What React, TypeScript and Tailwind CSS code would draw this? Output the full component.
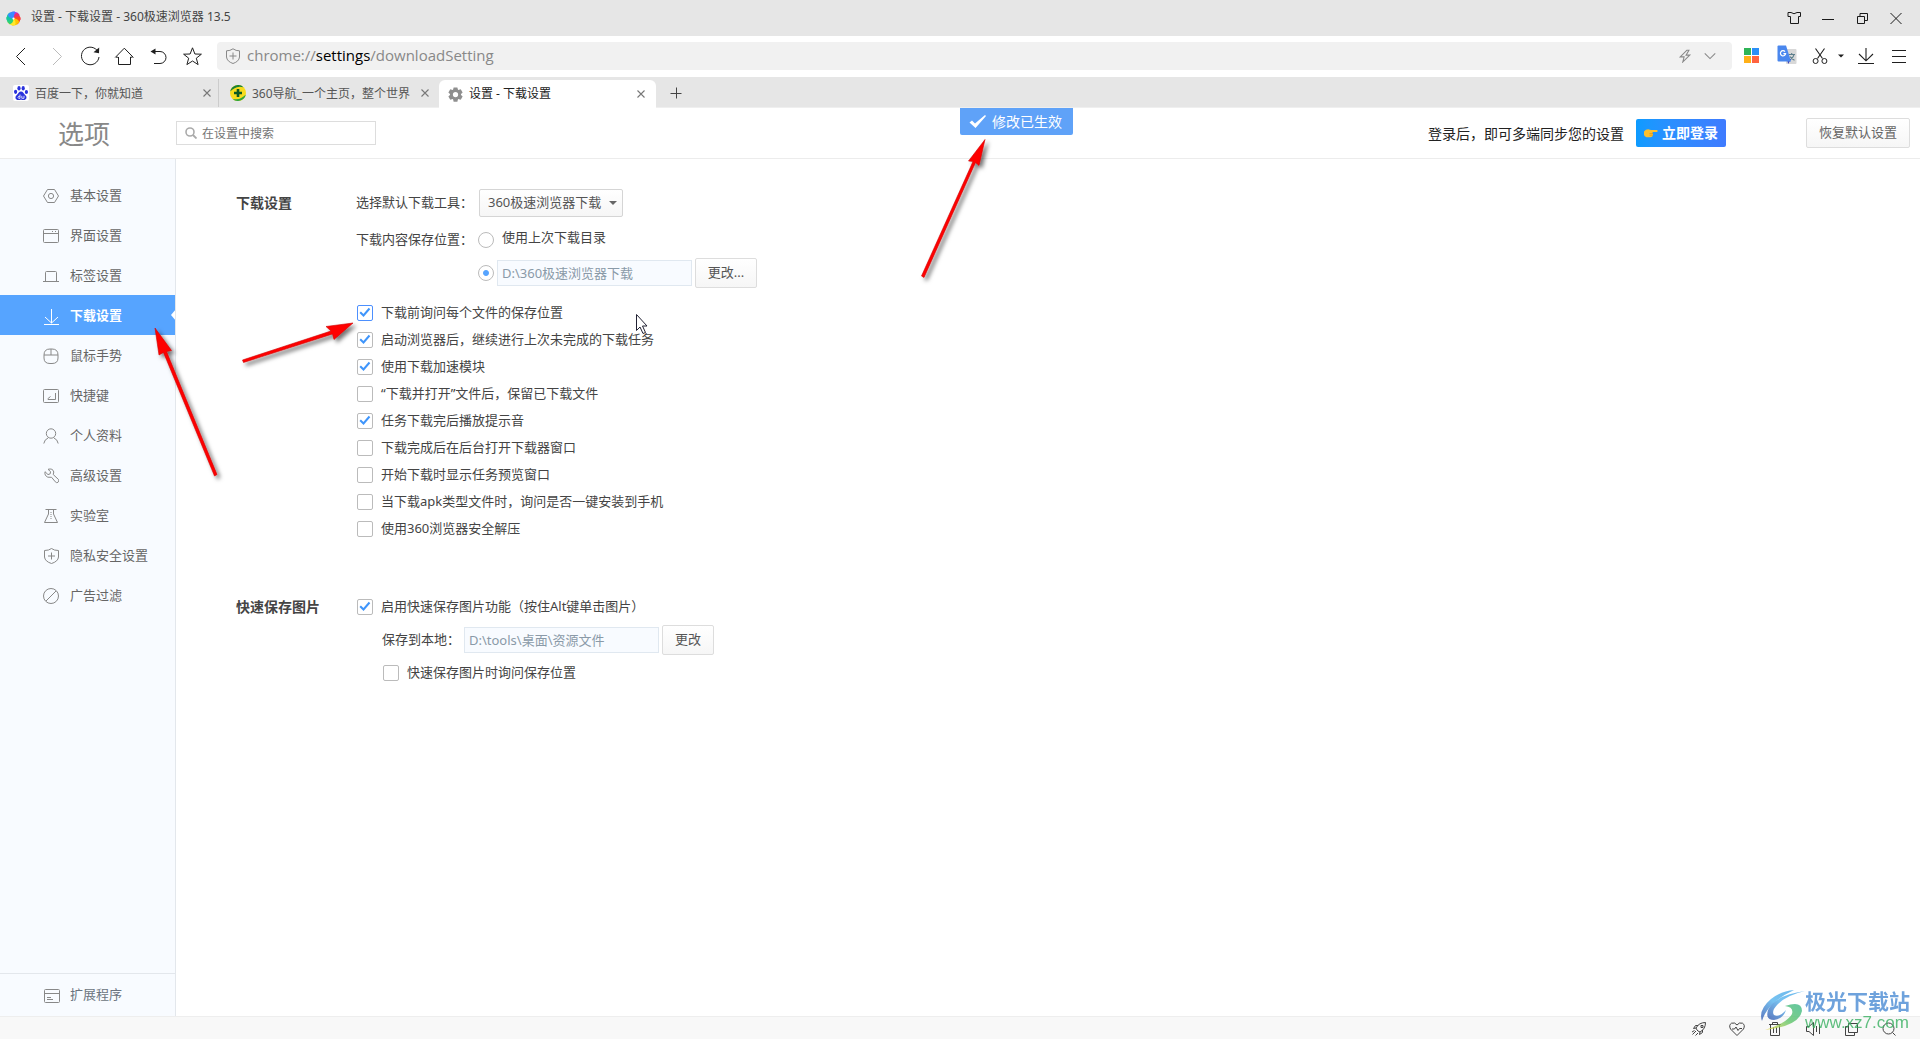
import { useState } from "react";
import type { ReactNode } from "react";

type IconProps = { children: ReactNode; size?: string; box?: string; className?: string };

function Icon({ children, size = "size-4", box = "0 0 16 16", className = "" }: IconProps) {
  return (
    <svg
      viewBox={box}
      className={`${size} shrink-0 ${className}`}
      fill="none"
      stroke="currentColor"
      strokeWidth="1"
      aria-hidden="true"
    >
      {children}
    </svg>
  );
}

function BrowserLogo() {
  const petals = ["#a535f0", "#f0306a", "#ff4b1f", "#ffc400", "#ffe92b", "#2fd07a", "#12c8a0", "#3a8bff"];
  return (
    <svg viewBox="-8 -8 16 16" className="size-[15px] shrink-0" aria-hidden="true">
      {petals.map((color, i) => (
        <path key={color} d="M0 0 Q-3.5 -4 -1.5 -7.2 Q4 -8 6.4 -4 Q4 -3 0 0Z" fill={color} transform={`rotate(${i * 45})`} />
      ))}
      <circle r="1.2" fill="#fff" />
    </svg>
  );
}

function TitleBar() {
  const button = "flex h-9 w-[34px] items-center justify-center";
  return (
    <header className="flex h-9 shrink-0 items-center bg-[#e6e6e6] pr-[7px] pl-1.5 text-[#1a1a1a]">
      <BrowserLogo />
      <h1 className="ml-2.5 pb-0.5 text-xs text-[#444]">设置 - 下载设置 - 360极速浏览器 13.5</h1>
      <div className="ml-auto flex">
        <button className={button} aria-label="皮肤">
          <Icon>
            <path d="M5 2.5 L2 2.5 L2 6.5 L4.5 6.5 L4.5 13.5 L12.5 13.5 L12.5 6.5 L14.5 6.5 L14.5 2.5 L11 2.5 Q8 5 5 2.5Z" />
          </Icon>
        </button>
        <button className={button} aria-label="最小化">
          <Icon>
            <path d="M2 9.5H14" />
          </Icon>
        </button>
        <button className={button} aria-label="还原">
          <Icon>
            <path d="M3.5 6.5H10.5V13.5H3.5ZM6 6V3.5H13.5V10.5H11" />
          </Icon>
        </button>
        <button className={button} aria-label="关闭">
          <Icon>
            <path d="M2.5 3 L13.5 14 M13.5 3 L2.5 14" />
          </Icon>
        </button>
      </div>
    </header>
  );
}

function Toolbar() {
  const button = "flex h-8 w-[34px] shrink-0 items-center justify-center";
  const wide = "flex h-8 w-[35px] shrink-0 items-center justify-center";
  return (
    <nav className="flex h-[41px] shrink-0 items-center bg-white pr-[5px] pb-[2px] pl-[5px] text-[#1f1f1f]" aria-label="工具栏">
      <button className={button} aria-label="后退">
        <Icon size="size-5" box="0 0 20 20">
          <path d="M13 2 L4.5 10.5 L13 19" />
        </Icon>
      </button>
      <button className={`${button} text-[#bbb]`} aria-label="前进">
        <Icon size="size-5" box="0 0 20 20">
          <path d="M7 2 L15.5 10.5 L7 19" />
        </Icon>
      </button>
      <button className={button} aria-label="刷新">
        <Icon size="size-5" box="0 0 20 20">
          <path d="M17 4.3 A8.8 8.8 0 1 0 19 11" />
          <path d="M19.2 1.5 L19 7.2 L13.5 6.2Z" fill="currentColor" stroke="none" />
        </Icon>
      </button>
      <button className={button} aria-label="主页">
        <Icon size="size-5" box="0 0 20 20">
          <path d="M1.2 11.5 L10.3 2.2 L19.4 11.5 M4 11.2 H2 M18.6 11.2 H16.5 M4.5 11 V18.5 H16.5 V11" />
        </Icon>
      </button>
      <button className={button} aria-label="撤销">
        <Icon size="size-5" box="0 0 20 20">
          <path d="M6 5.5 H12 A6 6 0 0 1 12 17.500 H6" />
          <path d="M2.500 5.500 L7.500 2.500 V8.500Z" fill="currentColor" stroke="none" />
        </Icon>
      </button>
      <button className={button} aria-label="收藏">
        <Icon size="size-5" box="0 0 20 20">
          <path d="M10.5 1.8 L12.9 8 L19.4 8.2 L14.3 12.2 L16.1 18.6 L10.5 15 L4.9 18.6 L6.7 12.2 L1.6 8.2 L8.1 8Z" />
        </Icon>
      </button>

      <div className="ml-2 flex h-7 flex-1 items-center rounded-sm bg-[#f1f1f1] pr-3.5 pl-2 text-[#888]">
        <Icon>
          <path d="M8 0.8 Q11 3 14.5 2.8 V9 Q14 13.5 8 15.5 Q2 13.5 1.5 9 V2.8 Q5 3 8 0.8Z M8 4.5V11.5M4.5 8H11.5" />
        </Icon>
        <p className="ml-1.5 pb-0.5 font-['Open_Sans',sans-serif] text-[15px] leading-6 text-[#888]">
          chrome://<span className="text-black">settings</span>/downloadSetting
        </p>
        <button className="mr-3 ml-auto" aria-label="极速模式">
          <Icon size="size-3.5">
            <path d="M10 1.5 L2.5 9 H7 L5.5 14.8 L13.5 7 H9.2 L12.5 1.5Z" strokeWidth="1.2" />
          </Icon>
        </button>
        <button className="pr-0.5" aria-label="展开地址栏">
          <Icon size="size-3">
            <path d="M1 4.5 L8 11.5 L15 4.5" strokeWidth="1.4" />
          </Icon>
        </button>
      </div>

      <button className={`${wide} ml-0.5`} aria-label="应用">
        <Icon size="size-[15px]" box="0 0 15 15">
          <g stroke="none">
            <path d="M0 0H7V7H0Z" fill="#2fb457" />
            <path d="M8 0H15V7H8Z" fill="#2a8ff7" />
            <path d="M0 8H7V15H0Z" fill="#ffb018" />
            <path d="M8 8H15V15H8Z" fill="#ff6340" />
          </g>
        </Icon>
      </button>
      <button className={wide} aria-label="翻译">
        <svg viewBox="0 0 20 20" className="mb-0.5 size-5" aria-hidden="true">
          <rect x="9" y="4" width="10.5" height="15" rx="1" fill="#d8d8d8" />
          <path d="M11.5 9.5H18M14.7 8V9.5M17 9.5C16.5 12 14.5 14 12.5 15M13 11.5C14 13.5 16 14.5 17.5 15.2" stroke="#5d7f8c" strokeWidth="1.1" fill="none" />
          <path d="M10 14H14L11.2 19Z" fill="#3a3fb8" />
          <path d="M1.5 0.5H9L14 16.5H1.5Q0.5 16.5 0.5 15.5V1.5Q0.5 0.5 1.5 0.5Z" fill="#4a87ee" />
          <path d="M8 6.600A2.600 2.600 0 1 0 8.600 8.600H6.400" stroke="#fff" strokeWidth="1.2" fill="none" />
        </svg>
      </button>
      <button className="flex h-8 w-11 shrink-0 items-center gap-2.5 pl-2" aria-label="截图">
        <Icon>
          <path d="M3.5 0.5 L10.5 10.5 M12.5 0.5 L5.5 10.5" strokeWidth="1.1" />
          <circle cx="3.6" cy="13" r="2.5" />
          <circle cx="12.4" cy="13" r="2.5" />
        </Icon>
        <Icon size="w-1.5 h-1" box="0 0 6 4">
          <path d="M0 0.5H6L3 3.5Z" fill="currentColor" stroke="none" />
        </Icon>
      </button>
      <button className={wide} aria-label="下载">
        <Icon>
          <path d="M8 0V12.5M1 6L8 12.8L15 6M0 15.5H16" strokeWidth="1.1" />
        </Icon>
      </button>
      <button className="flex h-8 w-8 shrink-0 items-center justify-center" aria-label="菜单">
        <Icon>
          <path d="M1 2.5H15M1 8.5H15M1 14.5H15" />
        </Icon>
      </button>
    </nav>
  );
}

function CloseTab() {
  return (
    <button className="ml-auto shrink-0 text-[#777]" aria-label="关闭标签页">
      <Icon size="size-2" box="0 0 8 8">
        <path d="M0.5 0.5L7.5 7.5M7.5 0.5L0.5 7.5" strokeWidth="1.1" />
      </Icon>
    </button>
  );
}

function BaiduIcon() {
  return (
    <svg viewBox="0 0 16 16" className="size-4 shrink-0 rounded-xs bg-white" aria-hidden="true">
      <g fill="#2a32dd">
        <ellipse cx="2.6" cy="6.8" rx="1.6" ry="2.1" />
        <ellipse cx="6" cy="3.2" rx="1.6" ry="2.2" />
        <ellipse cx="10.2" cy="3.2" rx="1.6" ry="2.2" />
        <ellipse cx="13.4" cy="7" rx="1.6" ry="2.1" />
        <path d="M8 6.6C10.2 6.6 10.6 8.8 12.4 10.2C14.6 12.2 13.2 15 10.8 15C9.4 15 9 14.7 8 14.7S6.6 15 5.2 15C2.6 15 1.4 12.2 3.6 10.2C5.4 8.8 5.8 6.6 8 6.6Z" />
      </g>
      <path d="M7 9.5V13.3H5.6Q4.4 12.4 5.6 11.3H7M8.8 10.8V13.3H11V10.8" fill="none" stroke="#fff" strokeWidth="0.8" />
    </svg>
  );
}

function NavIcon() {
  return (
    <svg viewBox="0 0 16 16" className="size-4 shrink-0" aria-hidden="true">
      <circle cx="8" cy="8" r="8" fill="#f7dc1d" />
      <path d="M0.2 6.5A8 8 0 0 1 13.5 2.2Q8 0.8 4.6 3.2Q2 4.6 0.2 6.5Z" fill="#15803a" />
      <path d="M15.8 9.5A8 8 0 0 1 2.6 13.9Q8 15.2 11.6 12.8Q14 11.2 15.8 9.5Z" fill="#2fa43c" />
      <path d="M6.7 4H9.3V6.7H12V9.3H9.3V12H6.7V9.3H4V6.7H6.7Z" fill="#0c5a24" />
    </svg>
  );
}

function GearIcon() {
  return (
    <svg viewBox="-8 -8 16 16" className="size-[15px] shrink-0" aria-hidden="true">
      <g fill="#8f8f8f">
        {[0, 60, 120, 180, 240, 300].map((a) => (
          <path key={a} d="M-2 -7.6H2L2.8 -4H-2.8Z" transform={`rotate(${a})`} />
        ))}
      </g>
      <circle r="4.3" fill="none" stroke="#8f8f8f" strokeWidth="3" />
    </svg>
  );
}

function TabStrip() {
  return (
    <div className="flex h-[31px] shrink-0 items-end border-b border-[#efefef] bg-[#e6e6e6] text-xs text-[#555]">
      <div className="flex h-7 w-[219px] items-center border-r border-[#ccc] pr-[7px] pl-[13px]">
        <BaiduIcon />
        <a href="#baidu" className="ml-1.5 pt-0.5">百度一下，你就知道</a>
        <CloseTab />
      </div>
      <div className="flex h-7 w-[220px] items-center pr-2.5 pl-[11px]">
        <NavIcon />
        <a href="#nav" className="ml-1.5 overflow-hidden pt-0.5 whitespace-nowrap">360导航_一个主页，整个世界</a>
        <CloseTab />
      </div>
      <div className="-mb-px flex h-7 w-[217px] items-center rounded-t-md bg-white pr-[11px] pl-[9px] text-[#222]">
        <GearIcon />
        <a href="#settings" className="ml-1.5">设置 - 下载设置</a>
        <CloseTab />
      </div>
      <button className="ml-3.5 flex h-7 w-3 items-center text-[#444]" aria-label="新标签页">
        <Icon size="size-3" box="0 0 12 12">
          <path d="M6.5 0.5V11.5M0.5 6.5H11.5" />
        </Icon>
      </button>
    </div>
  );
}

function SettingsHeader() {
  return (
    <div className="relative flex h-[51px] shrink-0 items-center border-b border-[#ececec] bg-white pr-2.5">
      <h2 className="w-44 pt-px pl-[58px] text-[26px] leading-9 text-[#888]">选项</h2>
      <label className="flex h-6 w-[200px] items-center border border-[#ddd] pl-2">
        <Icon size="size-3" box="0 0 12 12" className="text-[#aaa]">
          <circle cx="5" cy="5" r="4" strokeWidth="1.6" />
          <path d="M8 8L11.5 11.5" strokeWidth="1.8" />
        </Icon>
        <input
          type="text"
          aria-label="在设置中搜索"
          placeholder="在设置中搜索"
          className="ml-[5px] w-40 bg-transparent pt-0.5 text-xs outline-none placeholder:text-[#757575]"
        />
      </label>

      <div role="status" className="absolute top-0 left-1/2 flex h-[27px] items-center gap-1.5 rounded-b-xs bg-[#5fa2f8] pr-[11px] pl-[9px] text-sm text-white">
        <Icon size="w-[17px] h-4" box="0 0 17 16">
          <path d="M0.5 8.5L3 6.5L6 9.5L16 1L17 2L6.5 14Z" fill="currentColor" stroke="none" />
        </Icon>
        修改已生效
      </div>

      <p className="ml-auto pt-px text-sm text-[#222]">登录后，即可多端同步您的设置</p>
      <button className="ml-3 flex h-7 w-[90px] items-center rounded-xs bg-linear-to-r from-[#0c9bff] to-[#3f7bff] pl-2 text-sm font-bold text-white">
        <svg viewBox="0 0 14 12" className="mr-1 h-3 w-3.5" aria-hidden="true">
          <path d="M0 4.5Q2 2 5 2.4L7 3H13Q14.4 3.9 13 4.9H8.5L9 8Q8.5 10.3 6 10.2H2.5Q0.4 9.5 0 8Z" fill="#fcc02e" />
          <path d="M5.5 6.5H9M5.5 8.2H8.8" stroke="#d98a10" strokeWidth="0.6" />
        </svg>
        立即登录
      </button>
      <button className="ml-20 h-[30px] w-[104px] rounded-xs border border-[#ddd] bg-linear-to-b from-white to-[#f6f6f6] text-[13px] text-[#666]">
        恢复默认设置
      </button>
    </div>
  );
}

const menu: { label: string; icon: ReactNode }[] = [
  { label: "基本设置", icon: <><path d="M4.5 1.5H11.5L15.5 8L11.5 14.5H4.5L0.5 8Z" /><circle cx="8" cy="8" r="2.6" /></> },
  { label: "界面设置", icon: <><rect x="0.5" y="1.5" width="15" height="13" rx="1" /><path d="M0.5 5.5H15.5M9 3.5H10M12 3.5H13" /></> },
  { label: "标签设置", icon: <path d="M0 13.5H16M2.5 13.5V4.5Q2.5 3.5 3.5 3.5H12.5Q13.5 3.5 13.5 4.5V13.5" /> },
  { label: "下载设置", icon: <path d="M8.5 0V14M2 8L8.5 14L15 8M1 15.5H16" /> },
  { label: "鼠标手势", icon: <path d="M1 7Q1 1 7 1H9Q15 1 15 7V10Q15 15.5 9 15.5H7Q1 15.5 1 10ZM1 7H15M8 1V7" /> },
  { label: "快捷键", icon: <><rect x="0.5" y="1.5" width="15" height="13" rx="1" /><path d="M12.5 5V11.5H5M4.5 11L7.5 8.5" /></> },
  { label: "个人资料", icon: <><circle cx="8" cy="5.5" r="4.7" /><path d="M0.8 15.5Q1.5 11.5 5 10M15.2 15.5Q14.5 11.5 11 10" /></> },
  { label: "高级设置", icon: <path d="M5 1.300Q9.800 0 10.800 4L10.200 6.500L15.500 11.500Q16.600 13.200 15 14.300Q13.500 15.200 12.300 13.800L8.600 9.300Q4 10 2.500 7.500Q1.600 6 2 3.700L5 6.600L7.200 5.800L7.500 3.600Z" /> },
  { label: "实验室", icon: <><path d="M2.500 1.500H13.500M5.500 1.500V6L1.500 14.500H14.500L10.500 6V1.500" /><path d="M8 4V11" strokeDasharray="1 1" /></> },
  { label: "隐私安全设置", icon: <path d="M8.5 0.5Q11 2.5 15.5 2.5V9Q15 13.5 8.5 15.5Q2 13.5 1.5 9V2.5Q6 2.5 8.5 0.5ZM8.5 4.5V11.5M5 8H12" /> },
  { label: "广告过滤", icon: <><circle cx="8" cy="8" r="7.5" /><path d="M3 13L13 3" /></> },
];

function Sidebar() {
  return (
    <aside className="flex w-44 shrink-0 flex-col border-r border-[#e3e7ec] bg-[#f8fbff] pt-4 text-[13px]">
      <nav aria-label="选项">
        <ul>
          {menu.map(({ label, icon }) => {
            const active = label === "下载设置";
            return (
              <li key={label}>
                <a
                  href={`#${label}`}
                  aria-current={active ? "page" : undefined}
                  className={`relative flex h-10 items-center pt-0.5 pl-[43px] ${active ? "bg-[#56a4ff] font-bold text-white" : "text-[#666]"}`}
                >
                  <Icon className={active ? "mt-0.5 text-white" : "text-[#888]"}>{icon}</Icon>
                  <span className="ml-[11px]">{label}</span>
                  {active && (
                    <svg viewBox="0 0 5 12" className="absolute top-3.5 right-0 h-3 w-1" aria-hidden="true">
                      <path d="M5 0V12L0 6Z" fill="#fff" />
                    </svg>
                  )}
                </a>
              </li>
            );
          })}
        </ul>
      </nav>
      <a href="#extensions" className="mt-auto flex h-[43px] items-center border-t border-[#e3e7ec] pl-[44px] text-[#6b7480]">
        <Icon className="mt-0.5 text-[#888]">
          <rect x="0.5" y="1.5" width="15" height="13" rx="1" />
          <path d="M0.5 5.5H15.5M3 9.5H7M3 11.5H9" />
        </Icon>
        <span className="ml-2.5">扩展程序</span>
      </a>
    </aside>
  );
}

function Check({ label, initial = false, focused = false, className = "" }: { label: string; initial?: boolean; focused?: boolean; className?: string }) {
  return (
    <label className={`flex h-[27px] items-center gap-2 whitespace-nowrap ${className}`}>
      <span className="grid size-4 shrink-0 place-items-center">
        <input
          type="checkbox"
          defaultChecked={initial}
          className={`peer col-start-1 row-start-1 size-4 appearance-none rounded-xs border bg-white ${focused ? "border-[#4d90fe]" : "border-[#bbb]"}`}
        />
        <svg viewBox="0 0 12 12" className="pointer-events-none invisible col-start-1 row-start-1 size-3 peer-checked:visible" aria-hidden="true">
          <path d="M1.2 5.2L4.5 8.5L10.5 1.5" fill="none" stroke="#3f95fb" strokeWidth="2" />
        </svg>
      </span>
      {label}
    </label>
  );
}

const radioStyle =
  "size-4 shrink-0 appearance-none rounded-full border border-[#bbb] bg-white checked:bg-radial checked:from-[#56a4ff] checked:from-25% checked:to-white checked:to-35%";
const pathStyle = "h-[26px] w-[195px] border border-[#e0e8f0] bg-[#f8fbff] px-1 pb-0.5 text-[13px] text-[#8a9aa8] outline-none";
const changeStyle = "h-[30px] rounded-xs border border-[#ddd] bg-linear-to-b from-white to-[#f6f6f6] text-[#555]";

const options: [string, boolean][] = [
  ["下载前询问每个文件的保存位置", true],
  ["启动浏览器后，继续进行上次未完成的下载任务", true],
  ["使用下载加速模块", true],
  ["“下载并打开”文件后，保留已下载文件", false],
  ["任务下载完后播放提示音", true],
  ["下载完成后在后台打开下载器窗口", false],
  ["开始下载时显示任务预览窗口", false],
  ["当下载apk类型文件时，询问是否一键安装到手机", false],
  ["使用360浏览器安全解压", false],
];

function DownloadSettings() {
  const [place, setPlace] = useState("custom");
  return (
    <main className="flex-1 bg-white pt-[30px] pl-[60px] text-[13px] text-[#444]">
      <section className="grid grid-cols-[120px_1fr]">
        <h3 className="flex h-7 items-center text-sm font-bold">下载设置</h3>
        <div>
          <div className="flex h-7 items-center">
            <label htmlFor="tool" className="w-[123px]">选择默认下载工具：</label>
            <span className="relative">
              <select id="tool" className="h-7 w-36 appearance-none rounded-xs border border-[#d5d5d5] bg-linear-to-b from-white to-[#f6f6f6] pl-2 text-[#555]">
                <option>360极速浏览器下载</option>
              </select>
              <svg viewBox="0 0 8 4" className="pointer-events-none absolute top-3 right-1.5 h-1 w-2" aria-hidden="true">
                <path d="M0 0H8L4 4Z" fill="#666" />
              </svg>
            </span>
          </div>
          <div className="mt-[9px] grid grid-cols-[122px_1fr]">
            <span className="flex h-7 items-center">下载内容保存位置：</span>
            <label className="flex h-7 items-center gap-2">
              <input type="radio" name="place" className={radioStyle} checked={place === "last"} onChange={() => setPlace("last")} />
              <span className="pb-1">使用上次下载目录</span>
            </label>
            <div className="col-start-2 mt-1 flex items-center gap-[3px]">
              <input type="radio" name="place" aria-label="自定义下载目录" className={radioStyle} checked={place === "custom"} onChange={() => setPlace("custom")} />
              <input type="text" readOnly aria-label="下载目录" value="D:\360极速浏览器下载" className={pathStyle} />
              <button className={`${changeStyle} w-[62px]`}>更改...</button>
            </div>
          </div>
          <div className="mt-[11px] pl-px">
            {options.map(([label, on], i) => (
              <Check key={label} label={label} initial={on} focused={i === 0} />
            ))}
          </div>
        </div>
      </section>

      <section className="mt-[51px] grid grid-cols-[120px_1fr]">
        <h3 className="flex h-[27px] items-center text-sm font-bold">快速保存图片</h3>
        <div className="pl-px">
          <Check label="启用快速保存图片功能（按住Alt键单击图片）" initial />
          <div className="mt-[5px] flex items-center pl-[25px]">
            <label htmlFor="local" className="w-[82px]">保存到本地：</label>
            <input id="local" type="text" readOnly value="D:\tools\桌面\资源文件" className={pathStyle} />
            <button className={`${changeStyle} ml-[3px] w-[52px]`}>更改</button>
          </div>
          <Check label="快速保存图片时询问保存位置" className="mt-1 pl-[26px]" />
        </div>
      </section>
    </main>
  );
}

function StatusBar() {
  const items: { name: string; icon: ReactNode }[] = [
    { name: "加速", icon: <path d="M6 9L5 7Q8 1.5 14.5 1.5Q14.5 8 9 11L7 10ZM5 7L2.5 7.5L4.5 4.5H7M9 11L8.5 13.5L11.5 11.5V9M10 4.5H12V6.5H10ZM5 10L1.5 13.5M7 12L4.5 14.5M3.5 9.5L1 11" /> },
    { name: "医生", icon: <path d="M8 14.5L1.5 8Q-0.5 4 2.5 2.2Q6 1 8 4Q10 1 13.5 2.2Q16.5 4 14.5 8ZM3 8H5.5L7 6L9 9.5L10.5 7.5H13" /> },
    { name: "清理", icon: <path d="M2 3.5H14M5.5 3V1.5H10.5V3M3.5 3.5V14.5H12.5V3.5M6.5 6V12M9.5 6V12" /> },
    { name: "声音", icon: <path d="M1.5 5.5H4L8.5 1.5V14.5L4 10.5H1.5ZM11.5 5V11M14.5 3V13" /> },
    { name: "窗口", icon: <path d="M5.5 2.5H14.5V11.5H5.5ZM5.5 5.5H2.5V14.5H11.5V11.5" /> },
    { name: "缩放", icon: <><circle cx="7.5" cy="7.5" r="5.5" /><path d="M11.5 11.5L14.5 14.5" /></> },
  ];
  return (
    <footer className="flex h-[23px] shrink-0 items-center justify-end gap-[22px] border-t border-[#eee] bg-[#f8f8f8] pt-0.5 pr-[23px] text-[#444]">
      {items.map(({ name, icon }) => (
        <button key={name} aria-label={name}>
          <Icon>{icon}</Icon>
        </button>
      ))}
    </footer>
  );
}

function Watermark() {
  return (
    <div className="pointer-events-none absolute right-2.5 bottom-1.5 flex items-start opacity-80">
      <svg viewBox="0 0 44 42" className="h-[42px] w-11" aria-hidden="true">
        <defs>
          <linearGradient id="swoosh" x1="1" y1="0" x2="0" y2="1">
            <stop offset="0" stopColor="#4aa8e8" />
            <stop offset="0.5" stopColor="#56b4ee" />
            <stop offset="1" stopColor="#3457b0" />
          </linearGradient>
          <linearGradient id="tail" x1="1" y1="0" x2="0" y2="1">
            <stop offset="0" stopColor="#3cb88a" />
            <stop offset="0.5" stopColor="#5ec46a" />
            <stop offset="1" stopColor="#f2dc50" />
          </linearGradient>
        </defs>
        <path d="M33 1Q20 2 10 10Q-3 21 1 32Q4 22 12 15Q20 7 33 1Z" fill="url(#swoosh)" />
        <path d="M44 2Q14 6 7 21Q4 31 13 31Q22 30 25 21Q18 29 13 26Q10 22 17 15Q26 6 44 2Z" fill="url(#swoosh)" />
        <path d="M24 17Q41 11 41 22Q38 37 4 41Q26 34 31 25Q33 18 24 17Z" fill="url(#tail)" />
      </svg>
      <div>
        <p className="text-[21px] leading-6 font-bold text-[#4a8bd4]">极光下载站</p>
        <p className="font-['Liberation_Sans',sans-serif] text-[17px] leading-5 font-normal text-[#38b060]">www.xz7.com</p>
      </div>
    </div>
  );
}

function Arrows() {
  return (
    <svg className="pointer-events-none absolute top-0 left-0 h-[500px] w-[1000px] overflow-visible" viewBox="0 0 1000 500" aria-hidden="true">
      <defs>
        <filter id="shade" x="-20%" y="-20%" width="150%" height="150%">
          <feDropShadow dx="3" dy="3" stdDeviation="2" floodColor="#000" floodOpacity="0.55" />
        </filter>
      </defs>
      <g fill="#fe0000" stroke="#d00000" strokeWidth="0.6" filter="url(#shade)">
        <path d="M155 328L171.5 350.5L166.5 351.5L217 474.5L214.5 476L163.5 352.5L159 355Z" />
        <path d="M353 323L334 339.5L332.5 334L243.5 362.5L242.5 360L331 331L326 326.5Z" />
        <path d="M985 139.5L979 165.5L975.5 162.5L924 277.5L921.5 276L973 161.5L968.5 161Z" />
      </g>
      <path d="M636.5 314.5V330.5L640 327L643 333.5L645.5 332.5L642.5 326H647Z" fill="#fff" stroke="#223" strokeWidth="1" />
    </svg>
  );
}

export default function App() {
  return (
    <div className="relative flex min-h-screen flex-col overflow-hidden bg-white font-['Noto_Sans','Noto_Sans_CJK_SC',sans-serif]">
      <TitleBar />
      <Toolbar />
      <TabStrip />
      <SettingsHeader />
      <div className="flex flex-1">
        <Sidebar />
        <DownloadSettings />
      </div>
      <StatusBar />
      <Arrows />
      <Watermark />
    </div>
  );
}
